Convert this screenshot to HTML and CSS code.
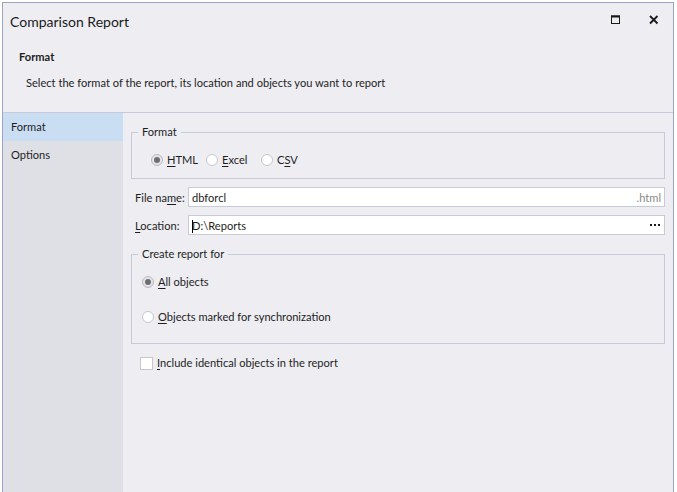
FILE: index.html
```html
<!DOCTYPE html>
<html>
<head>
<meta charset="utf-8">
<link rel="stylesheet" href="styles.css">
</head>
<body>
<div class="window">
  <div class="titlebar">
    <div class="title">Comparison Report</div>
    <div class="tbtns">
      <div class="tbtn"><svg width="10" height="10" viewBox="0 0 10 10"><rect x="0.5" y="1" width="8" height="7.5" fill="none" stroke="#1a1a1a" stroke-width="1"/><rect x="0" y="0.5" width="9" height="2" fill="#1a1a1a"/></svg></div>
      <div class="tbtn"><svg width="10" height="10" viewBox="0 0 10 10"><path d="M1 1 L8.5 8.5 M8.5 1 L1 8.5" stroke="#1a1a1a" stroke-width="1.8" fill="none"/></svg></div>
    </div>
  </div>
  <div class="header">
    <div class="h-title">Format</div>
    <div class="h-desc">Select the format of the report, its location and objects you want to report</div>
  </div>
  <div class="main">
    <div class="sidebar">
      <div class="nav-item active">Format</div>
      <div class="nav-item">Options</div>
    </div>
    <div class="content">
      <fieldset class="group group-format">
        <legend>Format</legend>
        <div class="radio-row">
          <label class="radio opt"><span class="rb checked"></span><span><u>H</u>TML</span></label>
          <label class="radio opt"><span class="rb"></span><span><u>E</u>xcel</span></label>
          <label class="radio opt"><span class="rb"></span><span>C<u>S</u>V</span></label>
        </div>
      </fieldset>
      <div class="field-row">
        <div class="flabel">File na<u>m</u>e:</div>
        <div class="finput"><span class="fval">dbforcl</span><span class="fsuffix">.html</span></div>
      </div>
      <div class="field-row">
        <div class="flabel"><u>L</u>ocation:</div>
        <div class="finput"><span class="fval"><span class="caret"></span>D:\Reports</span><span class="fdots"><i></i><i></i><i></i></span></div>
      </div>
      <fieldset class="group group-create">
        <legend>Create report for</legend>
        <div class="vlist">
          <label class="radio"><span class="rb checked"></span><span><u>A</u>ll objects</span></label>
          <label class="radio"><span class="rb"></span><span><u>O</u>bjects marked for synchronization</span></label>
        </div>
      </fieldset>
      <label class="check"><span class="cb"></span><span><u>I</u>nclude identical objects in the report</span></label>
    </div>
  </div>
</div>
</body>
</html>
```
FILE: styles.css
```css
html, body {
  margin: 0;
  padding: 0;
  background: #ffffff;
  overflow: hidden;
}
body {
  width: 677px;
  height: 492px;
  font-family: "Lato", "Noto Sans", sans-serif;
  font-size: 11.1px;
  color: #1e1e1e;
  white-space: nowrap;
}
u { text-decoration: underline; text-underline-offset: 2px; }
.window {
  margin: 2px 0 0 2px;
  width: 670px;
  height: 489px;
  border: 1px solid #9ea2c4;
  border-bottom: none;
  background: #ededf2;
  display: flex;
  flex-direction: column;
}
.titlebar {
  height: 38px;
  display: flex;
  align-items: center;
  justify-content: space-between;
  flex: none;
}
.title {
  padding-left: 7px;
  font-size: 14px;
  color: #1a1a1a;
  margin-top: -2px;
}
.tbtns { display: flex; align-self: stretch; }
.tbtn {
  width: 38px;
  display: flex;
  align-items: center;
  justify-content: center;
  margin-top: -5px;
}
.header {
  flex: none;
  border-bottom: 1px solid #c9cad9;
  padding: 8px 0 21px 0;
}
.h-title {
  font-weight: bold;
  line-height: 16px;
  padding-left: 16px;
}
.h-desc {
  margin-top: 10px;
  line-height: 16px;
  padding-left: 23px;
}
.main {
  flex: 1;
  display: flex;
}
.sidebar {
  width: 120px;
  background: #dfe0e5;
  flex: none;
}
.nav-item {
  height: 28px;
  line-height: 28px;
  padding-left: 8px;
}
.nav-item.active { background: #c9ddf3; }
.content {
  flex: 1;
  padding: 11px 8px 0 8px;
}
.group {
  margin: 0;
  border: 1px solid #c9cad8;
  padding: 0;
  min-width: 0;
}
.group legend {
  margin-left: 6px;
  padding: 0 4px;
  line-height: 16px;
}
.radio-row {
  display: flex;
  padding: 12px 0 10px 19px;
  height: 16px;
}
.radio {
  display: flex;
  align-items: center;
  gap: 4px;
  line-height: 16px;
}
.radio.opt { width: 55px; }
.rb {
  width: 12px;
  height: 12px;
  box-sizing: border-box;
  border: 1px solid #c6c6cc;
  border-radius: 50%;
  background: #ffffff;
  display: flex;
  align-items: center;
  justify-content: center;
  flex: none;
}
.rb.checked {
  background: #e4e4e8;
  border-color: #b9b9c0;
}
.rb.checked::after {
  content: "";
  width: 6px;
  height: 6px;
  border-radius: 50%;
  background: #6e6e72;
}
.field-row {
  display: flex;
  align-items: center;
  margin-top: 8px;
  padding-left: 4px;
}
.flabel {
  width: 53px;
  flex: none;
}
.finput {
  flex: 1;
  height: 20px;
  box-sizing: border-box;
  border: 1px solid #c9cad8;
  background: #ffffff;
  display: flex;
  align-items: center;
  justify-content: space-between;
  padding: 0 3px 0 3px;
}
.fval { position: relative; }
.caret {
  position: absolute;
  left: 0;
  top: 1px;
  width: 1px;
  height: 13px;
  background: #000;
}
.fsuffix { color: #8a8a8a; }
.fdots { display: flex; gap: 2px; padding-right: 1px; }
.fdots i { width: 2px; height: 2px; background: #1a1a1a; display: block; }
.group-create {
  margin-top: 11px;
}
.vlist {
  display: flex;
  flex-direction: column;
  gap: 19px;
  padding: 12px 0 18px 10px;
}
.check {
  display: flex;
  align-items: center;
  gap: 4px;
  margin: 11px 0 0 9px;
  line-height: 16px;
}
.cb {
  width: 13px;
  height: 13px;
  box-sizing: border-box;
  border: 1px solid #c6c6cc;
  background: #ffffff;
  flex: none;
}
```
